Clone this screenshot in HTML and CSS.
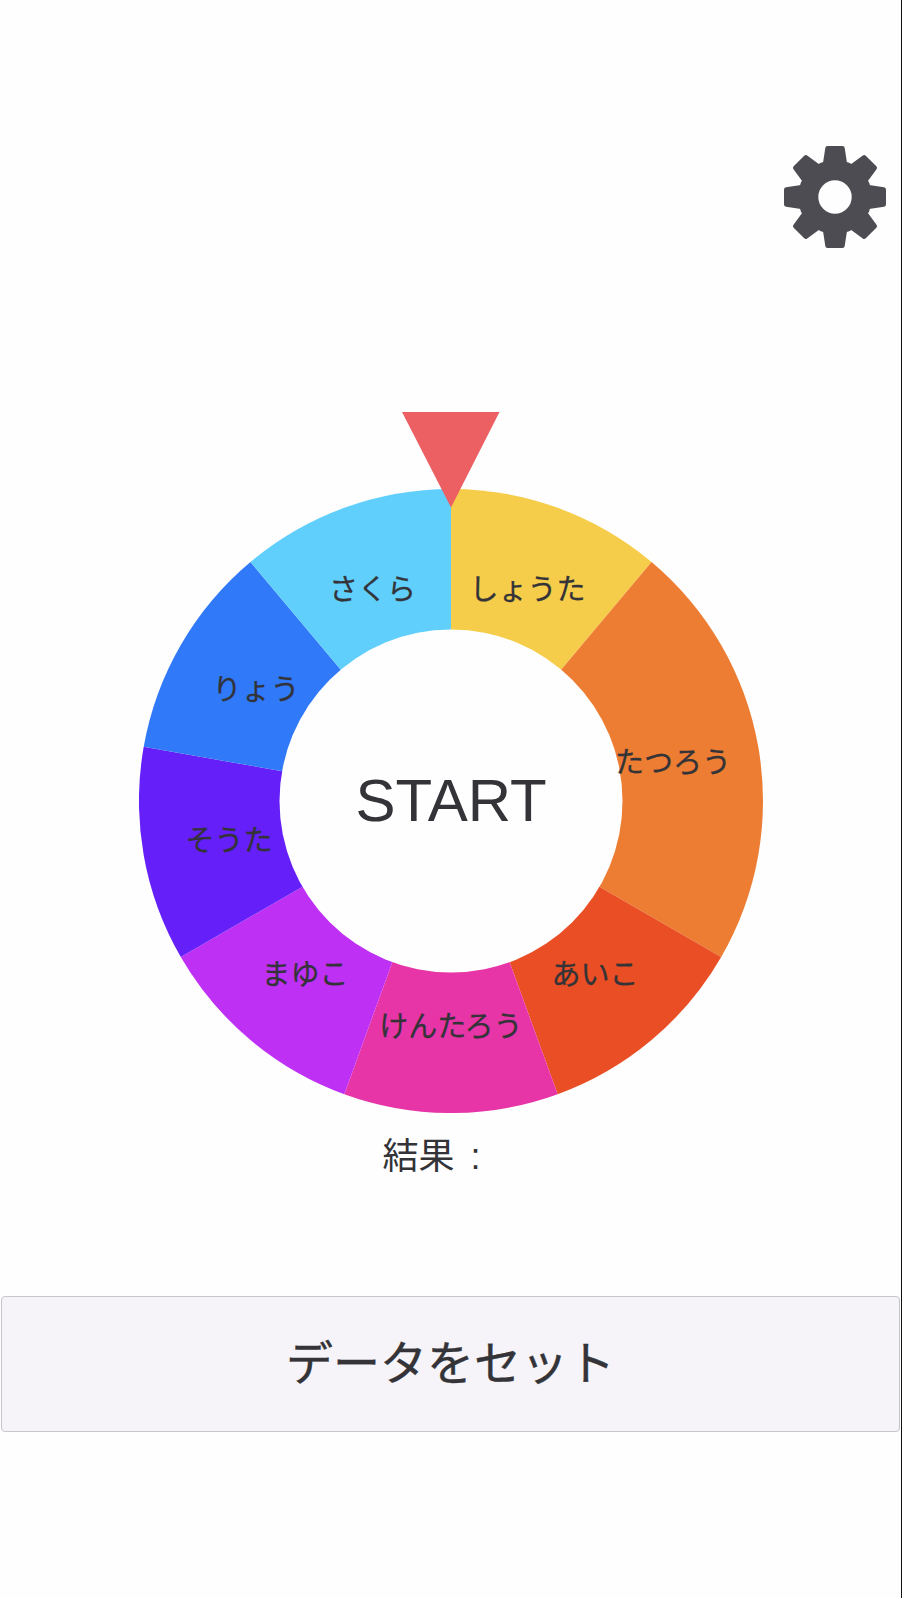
FILE: index.html
```html
<!DOCTYPE html>
<html lang="ja">
<head>
    <meta charset="UTF-8">
    <meta name="viewport" content="width=device-width, initial-scale=1.0">
    <title>ルーレット</title>

    <link rel="stylesheet" href="styles.css">
</head>
<body>

    <div class="page">

        <div class="top-bar">
            <svg class="gear" viewBox="-51 -51 102 102">
                <defs>
                    <path id="tooth" d="M-12 -34 L-9.7 -49 Q-9.5 -51 -7.5 -51 L7.5 -51 Q9.5 -51 9.7 -49 L12 -34 Z"/>
                </defs>
                <circle r="37"/>
                <use href="#tooth"/>
                <use href="#tooth" transform="rotate(45)"/>
                <use href="#tooth" transform="rotate(90)"/>
                <use href="#tooth" transform="rotate(135)"/>
                <use href="#tooth" transform="rotate(180)"/>
                <use href="#tooth" transform="rotate(225)"/>
                <use href="#tooth" transform="rotate(270)"/>
                <use href="#tooth" transform="rotate(315)"/>
                <circle class="gear-hole" r="16.7"/>
            </svg>
        </div>

        <svg class="wheel" viewBox="0 0 624 701">
            <path fill="#f6cd4a" d="M312 389 L312 77 A312 312 0 0 1 512.55 150 Z"/>
            <path fill="#ed7d32" d="M312 389 L512.55 150 A312 312 0 0 1 582.2 545 Z"/>
            <path fill="#e94e24" d="M312 389 L582.2 545 A312 312 0 0 1 418.7 682.2 Z"/>
            <path fill="#e735a8" d="M312 389 L418.7 682.2 A312 312 0 0 1 205.3 682.2 Z"/>
            <path fill="#bf30f5" d="M312 389 L205.3 682.2 A312 312 0 0 1 41.8 545 Z"/>
            <path fill="#651ff9" d="M312 389 L41.8 545 A312 312 0 0 1 4.7 334.8 Z"/>
            <path fill="#3079f9" d="M312 389 L4.7 334.8 A312 312 0 0 1 111.45 150 Z"/>
            <path fill="#61cffc" d="M312 389 L111.45 150 A312 312 0 0 1 312 77 Z"/>

            <circle class="wheel-hole" cx="312" cy="389" r="171.5"/>
            <text class="start" x="312" y="409">START</text>

            <text class="name" x="388.5" y="188">しょうた</text>
            <text class="name" x="534" y="361">たつろう</text>
            <text class="name" x="456" y="573">あいこ</text>
            <text class="name" x="312" y="625">けんたろう</text>
            <text class="name" x="166" y="573">まゆこ</text>
            <text class="name" x="90" y="439">そうた</text>
            <text class="name" x="117" y="288">りょう</text>
            <text class="name" x="233.5" y="188">さくら</text>

            <polygon class="pointer" points="263,0 360.5,0 312,95.5"/>
        </svg>

        <div class="result">結果 : </div>

        <button class="set-data">データをセット</button>

    </div>

</body>
</html>
```
FILE: styles.css
```css
body{
    margin: 0;
    background-color: #fefefe;
    color: #333338;
    font-family: "Liberation Sans", "Noto Sans CJK JP", sans-serif;
}

.page{
    width: 901px;
    height: 1598px;
    border-right: 1px solid #111;
    overflow: hidden;
}

.top-bar{
    display: flex;
    justify-content: flex-end;
    padding: 146px 15px 0 0;
}

.gear{
    display: block;
    width: 102px;
    height: 102px;
    fill: #4d4c52;
}

.gear .gear-hole{
    fill: #fefefe;
}

.wheel{
    display: block;
    width: 624px;
    height: 701px;
    margin: 164px auto 0;
}

.wheel-hole{
    fill: #fefefe;
}

.pointer{
    fill: #ec6064;
}

.start{
    font-size: 60px;
    text-anchor: middle;
    fill: #333338;
}

.name{
    font-size: 29px;
    text-anchor: middle;
    fill: #333338;
    stroke: #333338;
    stroke-width: 0.3px;
}

.result{
    margin-top: 22px;
    padding-right: 22px;
    font-size: 36px;
    line-height: 44px;
    word-spacing: 6px;
    text-align: center;
    white-space: pre;
}

.set-data{
    display: block;
    width: 899px;
    height: 136px;
    margin: 117px 0 0 1px;
    padding: 0 0 10px;
    border: 1px solid #c6c5ca;
    border-radius: 4px;
    background-color: #f6f4f8;
    color: #333338;
    font-family: "Noto Sans CJK JP", sans-serif;
    font-size: 47px;
    -webkit-text-stroke: 0.4px #333338;
}
```
